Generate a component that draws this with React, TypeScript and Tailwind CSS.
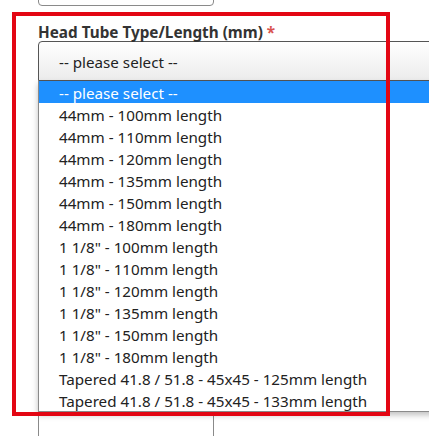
const options = [
  "44mm - 100mm length",
  "44mm - 110mm length",
  "44mm - 120mm length",
  "44mm - 135mm length",
  "44mm - 150mm length",
  "44mm - 180mm length",
  '1 1/8" - 100mm length',
  '1 1/8" - 110mm length',
  '1 1/8" - 120mm length',
  '1 1/8" - 135mm length',
  '1 1/8" - 150mm length',
  '1 1/8" - 180mm length',
  "Tapered 41.8 / 51.8 - 45x45 - 125mm length",
  "Tapered 41.8 / 51.8 - 45x45 - 133mm length",
];

const App = () => {
  return (
    <div className="relative w-[429px] h-[436px] overflow-hidden bg-white font-['Noto_Sans',sans-serif] text-[#222]">
      {/* previous field, mostly scrolled off */}
      <div className="ml-[38px] -mt-[24px] h-[30px] w-[176px] rounded-[4px] border border-[#8a8a8a]" />

      <div className="ml-[38px] mt-[16px] h-[19px] text-[15.3px] leading-[20px] font-bold text-[#333]">
        Head Tube Type/Length (mm) <span className="text-[#d9534f]">*</span>
      </div>

      <div className="ml-[38px] flex h-[40px] w-[420px] items-center rounded-tl-[4px] border border-[#555] bg-gradient-to-b from-white to-[#ececec] pl-[20px] pr-[6px]">
        <span className="flex-1 pt-[2px] text-[15.2px]">-- please select --</span>
        <svg width="10" height="8" viewBox="0 0 10 8" className="mr-[1px]">
          <path d="M1.5 2 L5 5.5 L8.5 2" fill="none" stroke="#111" strokeWidth="2" />
        </svg>
      </div>

      {/* next field, under the open list */}
      <div className="ml-[38px] mt-[300px] h-[60px] w-[176px] rounded-[4px] border border-[#8a8a8a]" />

      {/* open dropdown */}
      <ul className="absolute left-[38px] top-[81px] w-[420px] border-x border-b border-[#8a8a8a] bg-white text-[15.2px] shadow-[0_3px_6px_rgba(0,0,0,0.25)]">
        <li className="h-[22px] bg-[#1e90ff] pl-[20px] pt-[2px] leading-[20px] text-white">-- please select --</li>
        {options.map((o) => (
          <li key={o} className="h-[22px] pl-[20px] pt-[2px] leading-[20px]">
            {o}
          </li>
        ))}
      </ul>

      {/* highlight annotation */}
      <div className="pointer-events-none absolute left-[12px] top-[12px] h-[404px] w-[378px] border-4 border-[#e30613]" />
    </div>
  );
};

export default App;
